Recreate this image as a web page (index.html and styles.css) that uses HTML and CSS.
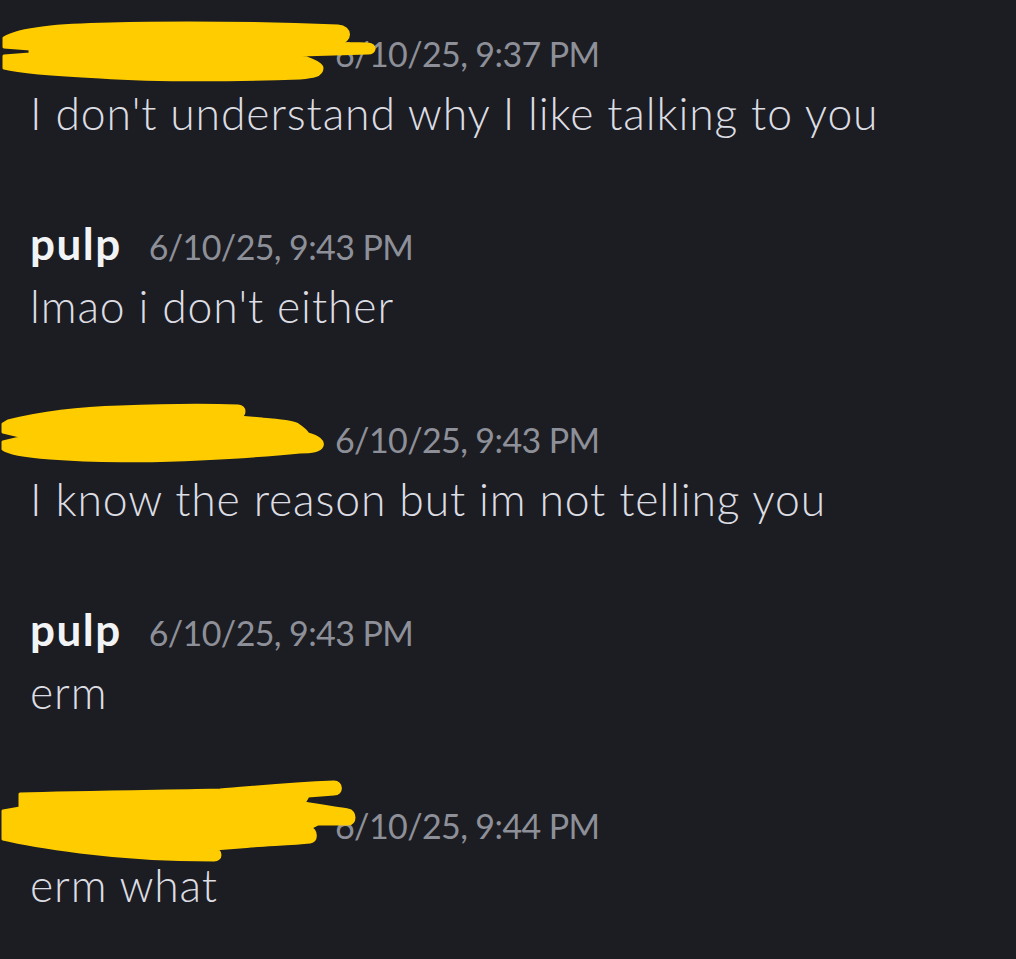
FILE: index.html
```html
<!DOCTYPE html>
<html lang="en">
<head>
<meta charset="utf-8">
<title>Chat</title>
<link rel="stylesheet" href="styles.css">
</head>
<body>
<main class="chat">
  <article class="msg">
    <header class="header">
      <span class="author redacted">&nbsp;</span>
      <time class="stamp">6/10/25, 9:37 PM</time>
      <svg class="scribble" viewBox="0 0 420 110" aria-hidden="true">
        <path class="ink" d="M4,38 C20,28 60,25 110,24 C180,22 260,23 338,26 C352,27 352,42 338,43 L300,43 C330,44 360,43 368,44 C376,45 376,53 368,53 L300,55 C310,60 322,63 322,68 C322,76 312,77 300,78 C240,80 160,81 100,77 C60,75 20,72 4,68 L4,56 L30,54 L30,49 L4,47 Z"/>
      </svg>
    </header>
    <p class="content">I don't understand why I like talking to you</p>
  </article>

  <article class="msg">
    <header class="header">
      <span class="author">pulp</span>
      <time class="stamp">6/10/25, 9:43 PM</time>
    </header>
    <p class="content">lmao i don't either</p>
  </article>

  <article class="msg">
    <header class="header">
      <span class="author redacted">&nbsp;</span>
      <time class="stamp">6/10/25, 9:43 PM</time>
      <svg class="scribble" viewBox="0 385 420 110" aria-hidden="true">
        <path class="ink" d="M8,420 C40,412 80,407 120,406 C170,404 210,404 238,405 C246,406 246,415 238,416 L262,418 C270,419 294,420 298,424 C304,428 306,430 308,433 C318,436 324,440 322,445 C320,450 312,451 300,451 C270,454 240,456 200,458 C150,461 90,460 50,457 C25,455 8,452 3,448 L3,441 L24,436 L3,431 L3,423 Z"/>
      </svg>
    </header>
    <p class="content">I know the reason but im not telling you</p>
  </article>

  <article class="msg">
    <header class="header">
      <span class="author">pulp</span>
      <time class="stamp">6/10/25, 9:43 PM</time>
    </header>
    <p class="content">erm</p>
  </article>

  <article class="msg">
    <header class="header">
      <span class="author redacted">&nbsp;</span>
      <time class="stamp">6/10/25, 9:44 PM</time>
      <svg class="scribble" viewBox="0 770 420 110" aria-hidden="true">
        <path class="ink" d="M20,792 C80,790 180,789 220,788 C250,786 280,782 334,780 C342,780 343,792 334,792 L308,794 L304,801 C320,804 336,806 348,808 C356,809 356,822 348,822 L318,822 L310,826 C316,828 318,838 310,840 C290,842 260,843 240,845 L214,847 C222,848 222,858 214,858 C170,858 120,855 80,850 C50,846 20,841 3,837 L3,809 L20,806 L20,800 Z"/>
      </svg>
    </header>
    <p class="content">erm what</p>
  </article>
</main>
</body>
</html>
```

FILE: styles.css
```css
html, body {
  margin: 0;
  padding: 0;
  background: #1c1d22;
}

body {
  width: 1016px;
  height: 959px;
  overflow: hidden;
  font-family: "Lato", "Noto Sans", sans-serif;
}

.chat {
  padding: 22px 0 0 30px;
}

.msg {
  margin: 0 0 67px 0;
}

.header {
  position: relative;
  display: flex;
  align-items: baseline;
  gap: 27px;
  height: 56px;
  line-height: 56px;
}

.author {
  font-size: 44px;
  font-weight: 700;
  letter-spacing: 1.5px;
  color: #f2f3f5;
}

.redacted {
  display: inline-block;
  width: 278px;
  letter-spacing: 0;
}

.stamp {
  font-size: 34px;
  font-weight: 400;
  letter-spacing: -0.6px;
  color: #8e9099;
}

.scribble {
  position: absolute;
  left: -30px;
  top: -22px;
  width: 420px;
  height: 110px;
  overflow: visible;
}

.ink {
  fill: #ffcc00;
  stroke: #ffcc00;
  stroke-width: 3;
  stroke-linejoin: round;
}

.content {
  margin: 0;
  font-size: 44.5px;
  font-weight: 300;
  letter-spacing: 0.87px;
  line-height: 70px;
  color: #dcdde2;
  white-space: nowrap;
}
```
